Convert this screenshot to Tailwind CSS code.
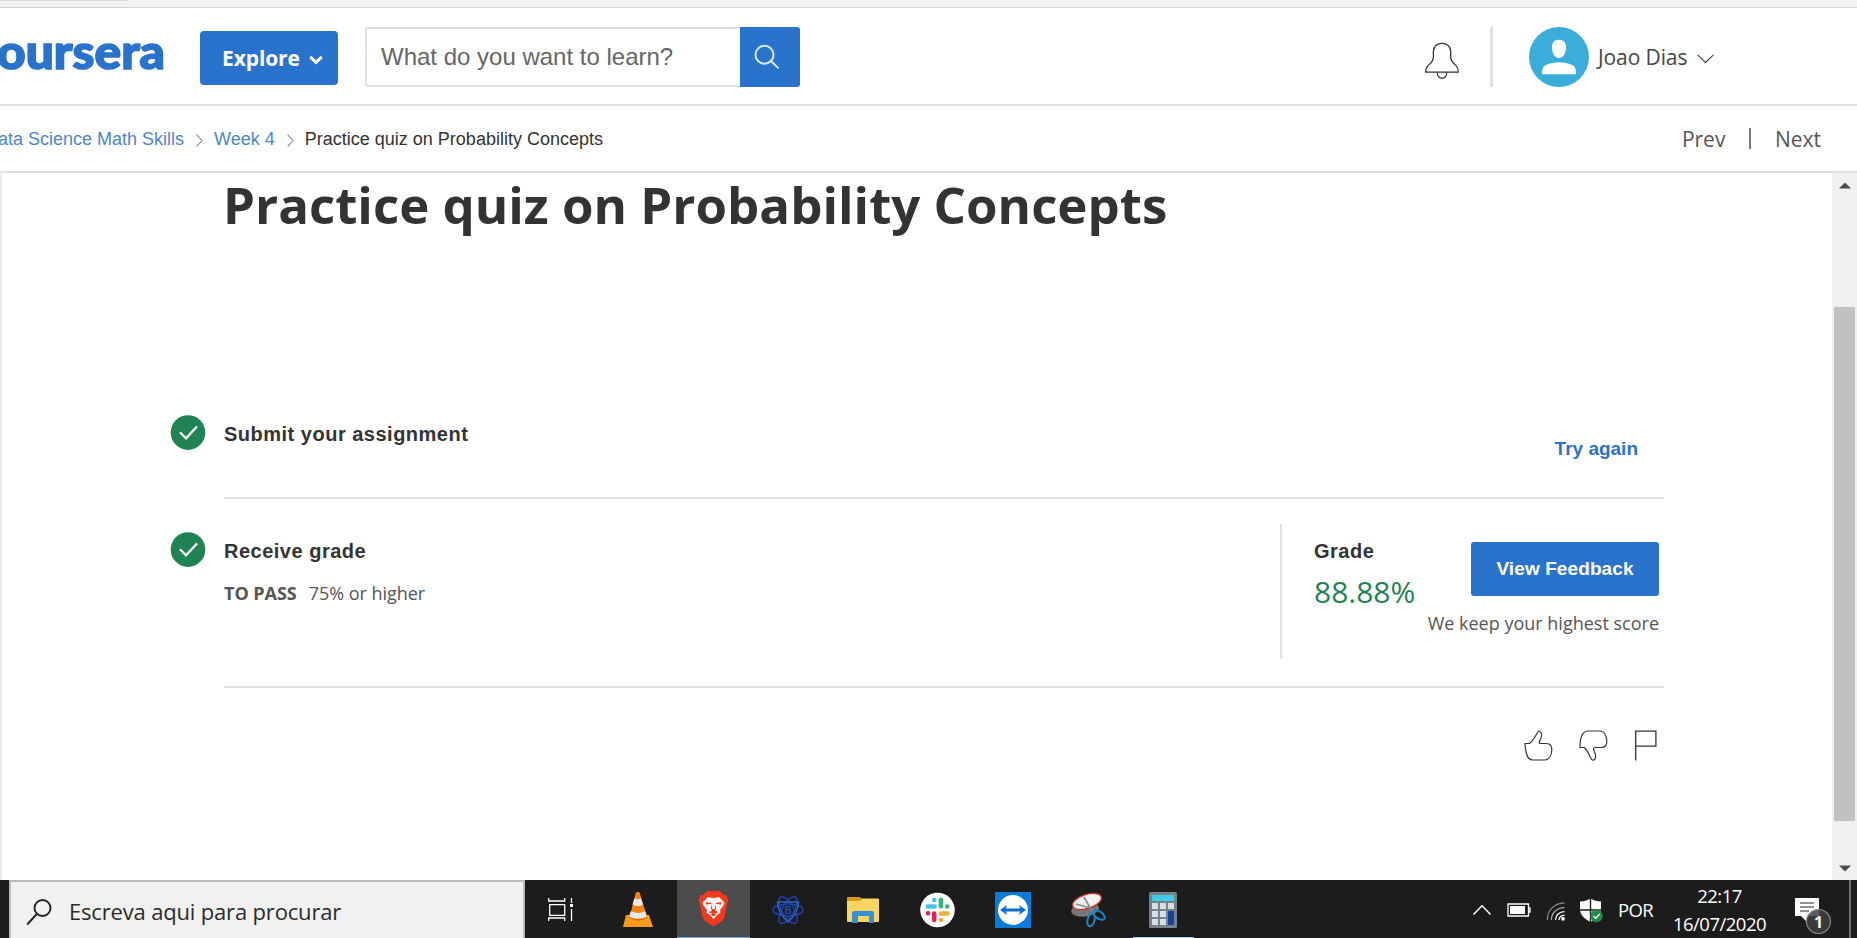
<!DOCTYPE html>
<html lang="en">
<head>
<meta charset="utf-8">
<title>Practice quiz on Probability Concepts | Coursera</title>
<script src="https://cdn.jsdelivr.net/npm/@tailwindcss/browser@4"></script>
</head>
<body class="w-[1857px] h-[938px] overflow-hidden bg-white flex flex-col font-['Open_Sans',sans-serif] text-[#333] whitespace-nowrap">

<!-- Browser chrome edge -->
<div class="h-2 shrink-0 bg-[#f2f2f2] border-b border-[#d2d2d2] flex items-start"><div class="w-[127px] h-px bg-[#dadada]"></div></div>

<!-- Site header -->
<header class="h-[98px] shrink-0 border-b-2 border-[#e1e1e1] flex items-start">
  <svg class="w-[200px] h-[90px] shrink-0" viewBox="0 0 200 90" role="img" aria-label="Coursera">
    <text x="-3" y="60.500" textLength="168" lengthAdjust="spacingAndGlyphs" font-family="Lato" font-weight="900" font-size="47" fill="#2a73cc" stroke="#2a73cc" stroke-width="1.600">oursera</text>
  </svg>
  <button class="mt-[23px] w-[138px] h-[54px] rounded bg-[#2a73cc] text-white font-bold text-[21px] leading-[54px] tracking-[-0.1px] flex items-center pl-[22px] gap-[9px]">
    <span>Explore</span>
    <svg class="w-[14px] h-[10px] mt-1" viewBox="0 0 14 10" fill="none" stroke="currentColor" stroke-width="3"><path d="M1.2 1.8 7 7.4l5.800-5.600"/></svg>
  </button>
  <div class="ml-[27px] mt-[19px] flex h-[60px] w-[435px]">
    <div class="w-[375px] border-2 border-r-0 border-[#e1e1e1] rounded-l-[3px] pl-[14px] font-['Liberation_Sans',sans-serif] text-2xl leading-[56px] text-[#666]">What do you want to learn?</div>
    <button class="w-[60px] bg-[#2a73cc] rounded-r-[3px] flex items-start pl-[14px] pt-[17px]">
      <svg class="w-[26px] h-[26px]" viewBox="0 0 26 26" fill="none" stroke="#dbe9fa" stroke-width="2"><circle cx="10.500" cy="10.700" r="9"/><path d="m17 17 7.600 7.400"/></svg>
    </button>
  </div>
  <div class="ml-auto flex items-start mr-[143px]">
    <svg class="mt-[34px] w-[36px] h-[38px]" viewBox="0 0 36 38" fill="none" stroke="#333" stroke-width="1.300"><path d="M1.700 30.200h32.600c0-3-.2-4.600-2-6.300-3-3-5.600-4.400-5.600-8.900V9.500c0-5-3.900-8.200-8.700-8.200S9.400 4.500 9.400 9.500V15c0 4.500-2.600 5.900-5.600 8.900-1.900 1.700-2.100 3.300-2.100 6.300Z"/><path d="M13.300 30.400c-.3 7.700 9.700 7.700 9.400 0"/></svg>
    <div class="mt-[19px] ml-[30px] w-[3px] h-[60px] bg-[#e1e1e1]"></div>
    <svg class="mt-[19px] ml-9 w-[60px] h-[60px]" viewBox="0 0 60 60"><circle cx="30" cy="30" r="30" fill="#3aaddb"/><path fill="#fff" d="M30 12.800c5 0 7.500 3.300 7 8.400-.5 5.600-2.800 9.800-7 9.800s-6.500-4.200-7-9.800c-.5-5.100 2-8.400 7-8.400ZM13 47.300c0-6 1.300-8.600 5-9.700 8-3.100 16-3.100 24 0 3.700 1.100 5 3.700 5 9.700Z"/></svg>
    <div class="mt-[33px] ml-[9px] text-[21px] leading-8 tracking-[-0.1px] w-[90px] text-[#444]">Joao Dias</div>
    <svg class="mt-[46px] ml-[9px] w-[17px] h-[10px]" viewBox="0 0 17 10" fill="none" stroke="#444" stroke-width="1.200"><path d="m.6.900 7.900 7.600L16.400.900"/></svg>
  </div>
</header>

<!-- Breadcrumbs -->
<nav class="h-[67px] shrink-0 border-b-2 border-[#e1e1e1] flex items-center justify-between pr-[36px]">
  <div class="flex items-center text-[18px] leading-6 font-['Liberation_Sans',sans-serif] text-[#4e87c8]">
    <span class="ml-[-2px]">ata Science Math Skills</span>
    <svg class="ml-3 mt-1 w-[7px] h-[13px]" viewBox="0 0 7 13" fill="none" stroke="#888" stroke-width="1.100"><path d="m.6.600 5.400 5.900-5.400 5.900"/></svg>
    <span class="ml-[11px]">Week 4</span>
    <svg class="ml-3 mt-1 w-[7px] h-[13px]" viewBox="0 0 7 13" fill="none" stroke="#888" stroke-width="1.100"><path d="m.6.600 5.400 5.900-5.400 5.900"/></svg>
    <span class="ml-[11px] text-[#333]">Practice quiz on Probability Concepts</span>
  </div>
  <div class="flex items-center text-[21px] leading-8 text-[#555]">
    <span>Prev</span><span class="ml-6 mr-[24px] w-[1.500px] h-[21px] bg-[#777]"></span><span>Next</span>
  </div>
</nav>

<!-- Scrolling page -->
<div class="flex-1 min-h-0 flex">
  <main class="flex-1 border-l-2 border-[#ececec] pl-[168px] pr-[168px] flex flex-col">
    <h1 class="ml-[53px] h-[237px] shrink-0 text-[51px] leading-[62px] font-bold">Practice quiz on Probability Concepts</h1>
    <section class="flex h-[89px] shrink-0">
      <svg class="mt-[5px] w-[36px] h-[36px] shrink-0" viewBox="0 0 36 36"><circle cx="18" cy="17.600" r="17.300" fill="#1f8354"/><path d="m10 17.300 6 6 11-11.800" fill="none" stroke="#fff" stroke-width="2.300"/></svg>
      <div class="ml-[18px] flex-1 border-b-2 border-[#e1e1e1] flex justify-between font-['Liberation_Sans',sans-serif] font-bold">
        <h2 class="mt-2.5 text-[20px] leading-7 tracking-[0.5px]">Submit your assignment</h2>
        <a class="mt-[25px] mr-[26px] text-[19px] leading-7 text-[#2a73cc]">Try again</a>
      </div>
    </section>
    <section class="flex h-[189px] shrink-0">
      <svg class="mt-[33px] w-[36px] h-[36px] shrink-0" viewBox="0 0 36 36"><circle cx="18" cy="17.600" r="17.300" fill="#1f8354"/><path d="m10 17.300 6 6 11-11.800" fill="none" stroke="#fff" stroke-width="2.300"/></svg>
      <div class="ml-[18px] flex-1 border-b-2 border-[#e1e1e1] flex justify-between">
        <div>
          <h2 class="mt-[38px] text-[20px] leading-7 tracking-[0.5px] font-['Liberation_Sans',sans-serif] font-bold">Receive grade</h2>
          <p class="mt-[14px] text-[18px] leading-7 text-[#555] flex gap-3 tracking-[-0.04px]"><b>TO PASS</b><span>75% or higher</span></p>
        </div>
        <div class="mt-[25px] h-[135px] w-[384px] border-l-2 border-[#e1e1e1] pl-8 pr-[5px] flex">
          <div class="w-[102px]">
            <h3 class="mt-[13px] text-[20px] leading-7 tracking-[0.5px] font-['Liberation_Sans',sans-serif] font-bold">Grade</h3>
            <div class="text-[30px] leading-[40px] mt-[7px] text-[#1f8354]">88.88%</div>
          </div>
          <div class="flex-1 flex flex-col items-end">
            <button class="mt-[18px] w-[188px] h-[54px] rounded-[3px] bg-[#2a73cc] text-white font-['Liberation_Sans',sans-serif] font-bold text-[19px] tracking-[0.1px]">View Feedback</button>
            <p class="mt-[13px] text-[18px] leading-7 text-[#555]">We keep your highest score</p>
          </div>
        </div>
      </div>
    </section>
    <div class="mt-[42px] flex justify-end gap-[26px] pr-[7px]">
      <svg class="w-[29px] h-[31px]" viewBox="0 0 29 31" fill="none" stroke="#333" stroke-width="1.200"><path d="M1 13.500h4.500C10 10 12 4.500 14.500 1c3 .2 4 3.500 2.500 7-1.500 3.500-3 5.500-.5 5.500h6c4 0 5.500 3 5.300 6.500-.3 6-3 10-7 10H9C5.500 30 3.300 27.500 2.300 23 1.500 19 1 16.500 1 13.500Z"/></svg>
      <svg class="w-[29px] h-[31px]" viewBox="0 0 29 31" fill="none" stroke="#333" stroke-width="1.200"><path d="M1 17.500C1 10 1.800 6 4 3.300 5.500 1.500 7 1 9 1h11.500c4.500 0 7 4.500 7.300 10 .2 4-1.800 6.500-5.300 6.500h-6c-2.500 0-2.300 1.500-.9 4.500 1.400 3.500 1.400 6.500-.6 8-2 .5-2.500-.5-4-3.500-1.500-3.500-3-6.500-5.500-9Z"/></svg>
      <svg class="w-[23px] h-[31px]" viewBox="0 0 23 31" fill="none" stroke="#333" stroke-width="1.300"><path d="M1.700 30.500V1.200h20.200v14.900H1.700"/></svg>
    </div>
  </main>
  <div class="w-[25px] bg-[#f0f0f0] flex flex-col items-center">
    <svg class="w-[12px] h-[7px] mt-[9px]" viewBox="0 0 12 7"><path fill="#4c4c4c" d="M6 .500 12 6.500H0Z"/></svg>
    <div class="w-[21px] h-[514px] bg-[#c1c1c1] mt-[118px]"></div>
    <svg class="w-[12px] h-[7px] mt-auto mb-[8px]" viewBox="0 0 12 7"><path fill="#4c4c4c" d="M6 6.500 12 .500H0Z"/></svg>
  </div>
</div>

<!-- Taskbar -->
<footer class="h-[58px] shrink-0 bg-[#1c1c1c] flex text-white">
  <div class="ml-[9px] w-[516px] h-[58px] bg-[#f1f1f1] border-2 border-b-0 border-[#bbb] flex items-start text-[#2b2b2b]">
    <svg class="ml-[15px] mt-[16px] w-[27px] h-[29px]" viewBox="0 0 27 29" fill="none" stroke="#222" stroke-width="1.900"><circle cx="16.500" cy="10" r="8"/><path d="M10.800 16 1.200 26.500"/></svg>
    <span class="ml-4 mt-[13px] text-[22px] leading-8 tracking-[-0.17px]">Escreva aqui para procurar</span>
  </div>
  <div class="w-[152px] flex items-start">
    <svg class="ml-[23px] mt-[17px] w-[26px] h-[26px]" viewBox="0 0 26 26" fill="none" stroke="#fff" stroke-width="1.300"><path d="M1.700 7.700h15v10.600h-15zM.700 1v3h16V1M.700 24v-3h16v3M23.500 1v5M23.500 12v12"/><path fill="#fff" stroke="none" d="M22 7h3v3h-3z"/></svg>
    <svg class="ml-[48px] mt-[11px] w-[32px] h-[37px]" viewBox="0 0 32 37">
      <path fill="#fb9a16" d="M4 24h23l4 12H1Z"/><path fill="#d86a0a" d="M7 25c2 6 16 6 18 0l-1-4H8Z"/><path fill="#f58410" d="M13.800 2c.4-1.200 3.600-1.200 4 0l7 23c-3 3.500-14 3.500-17 0Z"/><path fill="#e8e8e8" d="M12.300 7.500c2 1 4.600 1 6.700 0l2 6c-3 2-7.500 2-10.500 0ZM9 20c4 2.500 10 2.500 14 0l1.700 5.500c-4 3-13.500 3-17.400 0Z"/>
    </svg>
  </div>
  <div class="w-[73px] h-[58px] bg-[#4b4b4b] border-b border-[#6fa0d8] flex items-start">
    <svg class="ml-[21px] mt-[11px] w-[31px] h-[36px]" viewBox="0 0 31 36">
      <path fill="#f6391b" d="M9 0h13l3.500 4 2.500-.3L30.500 9l-1 3-3 14c-1 3-4 5.500-11 9.500C8.500 31.500 5.500 29 4.500 26l-3-14-1-3L3 3.700l2.500.3Z"/>
      <path fill="#fff" d="m10 6 5.500 1.200L21 6l5.500 5.500-1 3-3.500 4.500.5 2.500-4 3-3 3.800-3-3.800-4-3L9 19l-3.500-4.500-1-3Z"/>
      <path fill="#f6391b" d="m7.500 11 6 1-1 1.300-3-.3-.5 2ZM23.500 11l-6 1 1 1.300 3-.3.5 2ZM13.500 13l-.8 4 1.300 2.500-3.500 1.700 5 1.800 5-1.800L17 19.500l1.300-2.500-.8-4-.5 5h-3ZM15.500 22l-3 1.500 3 2 3-2Z"/>
    </svg>
  </div>
  <div class="flex items-start">
    <svg class="ml-[22px] mt-[15px] w-[32px] h-[30px]" viewBox="0 0 32 30" fill="none" stroke="#2540ae" stroke-width="1.500">
      <ellipse cx="16" cy="15" rx="15" ry="6"/><ellipse cx="16" cy="15" rx="15" ry="6" transform="rotate(60 16 15)"/><ellipse cx="16" cy="15" rx="15" ry="6" transform="rotate(120 16 15)"/>
      <path stroke="#2565c8" d="M5.500 7h21C26 16 22 22 16 27 10 22 6 16 5.500 7Z"/><text x="16" y="18.500" text-anchor="middle" font-family="Liberation Sans" font-weight="700" font-size="10" fill="#2250b0" stroke="none">B</text>
    </svg>
    <svg class="ml-[43px] mt-[16px] w-[32px] h-[28px]" viewBox="0 0 32 28">
      <path fill="#d69c13" d="M0 1.500Q0 1 1 1h12l2 2v6H0Z"/><path fill="#fbd35f" d="M0 5h13l2-2.500h16q1 0 1 1V25q0 1-1 1H1q-1 0-1-1Z"/><path fill="#3690d6" d="M5 17q0-2 2-2h18q2 0 2 2v10h-5v-7H11v7H5Z"/>
    </svg>
    <svg class="ml-[41px] mt-[12px] w-[35px] h-[36px]" viewBox="0 0 35 36" stroke-width="4.600" stroke-linecap="round" fill="none">
      <circle cx="17.500" cy="18" r="17.300" fill="#fff"/>
      <path stroke="#40c5ef" d="M8 14.500h6.500M14.200 7.800v.1"/><path stroke="#36b37e" d="M21 7.800v6.500M27.200 14.500h.1"/><path stroke="#e0225a" d="M14.200 21.500v6.500M8 21.300h.1"/><path stroke="#e8b03a" d="M21 21.500h6.500M21 28h.1"/>
    </svg>
    <svg class="ml-[40px] mt-[12px] w-[36px] h-[36px]" viewBox="0 0 36 36"><path fill="#0b7ad8" d="M0 0h36v36H0z"/><circle cx="18" cy="18" r="15" fill="#fff"/><path fill="#0b6fce" d="m5 18 7-5-1.200 3.500h14.400L24 13l7 5-7 5 1.200-3.500H10.800L12 23Z"/></svg>
    <svg class="ml-[40px] mt-[12px] w-[35px] h-[37px]" viewBox="0 0 35 37">
      <ellipse cx="14" cy="17.500" rx="14" ry="7" fill="#777" transform="rotate(-8 14 17)"/><ellipse cx="16" cy="9.500" rx="15" ry="7" fill="#f2f2f2" stroke="#d02c2c" stroke-width="1.400" transform="rotate(-18 16 9.500)"/><path d="m13 5 9 16M5 12l14 4" stroke="#888" stroke-width="1.600"/><g fill="none" stroke="#1f83c2" stroke-width="2"><ellipse cx="20" cy="28" rx="3.500" ry="6.500" transform="rotate(15 20 28)"/><ellipse cx="28" cy="23" rx="3.500" ry="6.500" transform="rotate(-55 28 23)"/></g>
    </svg>
    <div class="ml-[27px] w-[61px] h-[58px] border-b border-[#a9c7ea] pl-[16px] pt-[12px]">
      <svg class="w-[28px] h-[36px]" viewBox="0 0 28 36"><rect width="28" height="36" rx="1.500" fill="#75818b"/><path fill="#3fcce8" d="M3 3h22v6H3z"/><path fill="#d8dee6" d="M3 11h6v6H3zm8 0h6v6h-6zm8 0h6v6h-6zM3 19h6v6H3zm8 0h6v6h-6zM3 27h6v6H3zm8 0h6v6h-6z"/><path fill="#12459a" d="M19 19h6v14h-6z"/></svg>
    </div>
  </div>
  <div class="ml-auto flex items-start">
    <svg class="mt-[24px] w-[20px] h-[12px]" viewBox="0 0 20 12" fill="none" stroke="#fff" stroke-width="1.500"><path d="m1.500 10.500 8.500-8.700 8.500 8.700"/></svg>
    <svg class="ml-[15px] mt-[23px] w-[24px] h-[14px]" viewBox="0 0 24 14"><path fill="none" stroke="#fff" stroke-width="1.300" d="M1 1h20.500v12H1zM21.500 5H23v4h-1.500"/><path fill="#fff" d="M3 3h15v8H3z"/></svg>
    <svg class="ml-[15px] mt-[22px] w-[21px] h-[20px]" viewBox="0 0 21 20" fill="none" stroke="#fff" stroke-width="1.300"><path stroke="#888" d="M1.500 18C.800 9 8 1 18.500 1.200"/><path stroke="#aaa" d="M5.500 18C5 11.500 11 5.500 18.500 5.700"/><path d="M9.500 18c0-4.500 4-8.500 9-8.300M13 18c0-2.500 2-4.800 5.500-4.600"/><circle cx="17" cy="16.800" r="1.200" fill="#fff"/></svg>
    <svg class="ml-[12px] mt-[18px] w-[26px] h-[25px]" viewBox="0 0 26 25"><path fill="#fff" d="M1 3.500C5 3.500 8 2.500 11.500.500 15 2.500 18 3.500 22 3.500V11c0 5-3 9-10.500 13C4 20 1 16 1 11Z"/><path stroke="#1c1c1c" stroke-width="1.400" d="M11.500 0v24M0 12h23"/><circle cx="17.500" cy="18" r="6.200" fill="#1f8a4a"/><path d="m14.500 18 2.200 2.300 4-4.300" fill="none" stroke="#fff" stroke-width="1.300"/></svg>
    <span class="ml-[13px] mt-[14px] w-[36px] text-[18.500px] leading-8 tracking-[-0.6px]">POR</span>
    <div class="ml-[17px] w-[97px] mt-[2px] text-center text-[18.500px] leading-7 tracking-[-0.500px]"><div>22:17</div><div>16/07/2020</div></div>
    <svg class="ml-[26px] mt-[17px] w-[38px] h-[38px]" viewBox="0 0 38 38"><path fill="#fff" d="M1 1h24v18H13v6l-6-6H1Z"/><path stroke="#222" stroke-width="1.200" d="M6 6h14M6 10h14M6 14h9"/><circle cx="24.500" cy="24.500" r="12" fill="#404040" fill-opacity=".85" stroke="#888" stroke-width="1.200"/><text x="24.500" y="30.500" text-anchor="middle" font-family="Open Sans" font-weight="700" font-size="16" fill="#fff">1</text></svg>
    <div class="ml-[17px] w-[2px] h-[58px] bg-[#707070] mr-[6px]"></div>
  </div>
</footer>
</body>
</html>
